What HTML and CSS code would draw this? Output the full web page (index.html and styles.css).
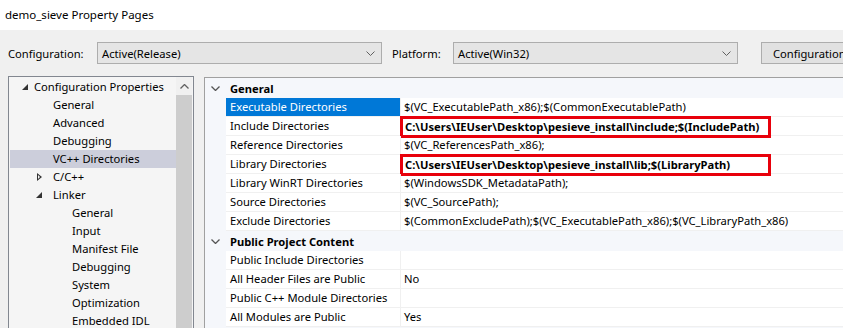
FILE: index.html
```html
<!DOCTYPE html>
<html lang="en">
<head>
    <meta charset="UTF-8">
    <title>demo_sieve Property Pages</title>
    <link rel="stylesheet" href="styles.css">
</head>
<body>
    <div class="titlebar">demo_sieve Property Pages</div>
    <div class="window">
        <div class="toolbar">
            <span class="label">Configuration:</span>
            <div class="combo config-combo">
                <span>Active(Release)</span>
                <svg width="9" height="5" viewBox="0 0 9 5"><path d="M0.5 0.5 L4.5 4.5 L8.5 0.5" fill="none" stroke="#606060" stroke-width="1"/></svg>
            </div>
            <span class="label platform-label">Platform:</span>
            <div class="combo platform-combo">
                <span>Active(Win32)</span>
                <svg width="9" height="5" viewBox="0 0 9 5"><path d="M0.5 0.5 L4.5 4.5 L8.5 0.5" fill="none" stroke="#606060" stroke-width="1"/></svg>
            </div>
            <button class="btn">Configuration Manager...</button>
        </div>

        <div class="main">
            <div class="tree">
                <div class="tree-items">
                    <div class="node lvl0"><span class="tri open"></span>Configuration Properties</div>
                    <div class="node lvl1">General</div>
                    <div class="node lvl1">Advanced</div>
                    <div class="node lvl1">Debugging</div>
                    <div class="node lvl1 selected">VC++ Directories</div>
                    <div class="node lvl1b"><span class="tri closed"></span>C/C++</div>
                    <div class="node lvl1b"><span class="tri open"></span>Linker</div>
                    <div class="node lvl2">General</div>
                    <div class="node lvl2">Input</div>
                    <div class="node lvl2">Manifest File</div>
                    <div class="node lvl2">Debugging</div>
                    <div class="node lvl2">System</div>
                    <div class="node lvl2">Optimization</div>
                    <div class="node lvl2">Embedded IDL</div>
                </div>
                <div class="scrollbar">
                    <div class="arrow">
                        <svg width="9" height="5" viewBox="0 0 9 5"><path d="M0.5 4.5 L4.5 0.5 L8.5 4.5" fill="none" stroke="#606060" stroke-width="1.3"/></svg>
                    </div>
                    <div class="thumb"></div>
                </div>
            </div>

            <div class="grid">
                <div class="group">
                    <span class="chev"><svg width="9" height="5" viewBox="0 0 9 5"><path d="M0.5 0.5 L4.5 4.5 L8.5 0.5" fill="none" stroke="#555" stroke-width="1.3"/></svg></span>
                    <span class="group-name">General</span>
                </div>
                <div class="row active"><span class="name">Executable Directories</span><span class="value">$(VC_ExecutablePath_x86);$(CommonExecutablePath)</span></div>
                <div class="row"><span class="name">Include Directories</span><span class="value bold"><span class="mark">C:\Users\IEUser\Desktop\pesieve_install\include;$(IncludePath)</span></span></div>
                <div class="row"><span class="name">Reference Directories</span><span class="value">$(VC_ReferencesPath_x86);</span></div>
                <div class="row"><span class="name">Library Directories</span><span class="value bold"><span class="mark">C:\Users\IEUser\Desktop\pesieve_install\lib;$(LibraryPath)</span></span></div>
                <div class="row"><span class="name">Library WinRT Directories</span><span class="value">$(WindowsSDK_MetadataPath);</span></div>
                <div class="row"><span class="name">Source Directories</span><span class="value">$(VC_SourcePath);</span></div>
                <div class="row"><span class="name">Exclude Directories</span><span class="value">$(CommonExcludePath);$(VC_ExecutablePath_x86);$(VC_LibraryPath_x86)</span></div>
                <div class="group">
                    <span class="chev"><svg width="9" height="5" viewBox="0 0 9 5"><path d="M0.5 0.5 L4.5 4.5 L8.5 0.5" fill="none" stroke="#555" stroke-width="1.3"/></svg></span>
                    <span class="group-name">Public Project Content</span>
                </div>
                <div class="row"><span class="name">Public Include Directories</span><span class="value"></span></div>
                <div class="row"><span class="name">All Header Files are Public</span><span class="value">No</span></div>
                <div class="row"><span class="name">Public C++ Module Directories</span><span class="value"></span></div>
                <div class="row"><span class="name">All Modules are Public</span><span class="value">Yes</span></div>
            </div>
        </div>
    </div>
</body>
</html>
```

FILE: styles.css
```css
* {
    margin: 0;
    padding: 0;
    box-sizing: border-box;
}

body {
    font-family: "Noto Sans", "Open Sans", sans-serif;
    font-size: 11.2px;
    color: #000;
    background: #f0f0f0;
    width: 843px;
    height: 328px;
    overflow: hidden;
}

.titlebar {
    height: 30px;
    background: #fff;
    padding-left: 5px;
    line-height: 30px;
    font-size: 11.5px;
}

.window {
    background: #f0f0f0;
}

.toolbar {
    display: flex;
    align-items: center;
    height: 46px;
    padding-left: 8px;
    white-space: nowrap;
}

.toolbar > * {
    flex-shrink: 0;
}

.label {
    width: 89px;
}

.platform-label {
    width: 61px;
    margin-left: 10px;
}

.combo {
    height: 22px;
    border: 1px solid #adadad;
    background: #e5e5e5;
    display: flex;
    align-items: center;
    justify-content: space-between;
    padding: 0 6px 0 4px;
}

.config-combo {
    width: 285px;
}

.platform-combo {
    width: 285px;
}

.btn {
    margin-left: 23px;
    height: 22px;
    padding: 0 11px;
    border: 1px solid #adadad;
    background: #e1e1e1;
    font-family: inherit;
    font-size: 11.2px;
    white-space: nowrap;
}

.main {
    display: flex;
    align-items: flex-start;
    padding-left: 8px;
}

.tree {
    width: 186px;
    height: 260px;
    flex-shrink: 0;
    border: 1px solid #828790;
    background: #f5f5f5;
    display: flex;
}

.tree-items {
    flex: 1;
    padding-top: 1px;
    padding-left: 1px;
}

.node {
    height: 18px;
    line-height: 18px;
    white-space: nowrap;
    display: flex;
    align-items: center;
}

.node.lvl0 {
    padding-left: 12px;
}

.node.lvl0 .tri {
    width: 12px;
}

.node.lvl1 {
    padding-left: 43px;
}

.node.lvl1b {
    padding-left: 26px;
}

.node.lvl1b .tri {
    width: 17px;
}

.node.lvl2 {
    padding-left: 62px;
}

.node.selected {
    background: #cccedb;
}

.tri {
    height: 10px;
    display: inline-block;
    position: relative;
}

.tri.open::before {
    content: "";
    position: absolute;
    left: 0;
    top: 2px;
    border-left: 6px solid transparent;
    border-bottom: 6px solid #333;
}

.tri.closed::before {
    content: "";
    position: absolute;
    left: 1px;
    top: 1px;
    width: 0;
    height: 0;
    border-top: 4px solid transparent;
    border-bottom: 4px solid transparent;
    border-left: 5px solid #333;
}

.tri.closed::after {
    content: "";
    position: absolute;
    left: 2px;
    top: 3px;
    border-top: 2px solid transparent;
    border-bottom: 2px solid transparent;
    border-left: 2.5px solid #f5f5f5;
}

.scrollbar {
    width: 16px;
    margin-right: 1px;
    background: #e8e8e8;
    display: flex;
    flex-direction: column;
}

.arrow {
    height: 18px;
    display: flex;
    align-items: center;
    justify-content: center;
    background: #f0f0f0;
}

.thumb {
    flex: 1;
    background: #cdcdcd;
}

.grid {
    margin-left: 10px;
    margin-top: 1px;
    flex: 1;
    border-top: 1px solid #a0a0a0;
    border-left: 1px solid #a0a0a0;
    background: #f5f7fb;
    padding-bottom: 20px;
}

.group {
    height: 20px;
    display: flex;
    align-items: center;
    background: #f5f7fb;
}

.chev {
    width: 21px;
    display: flex;
    justify-content: center;
    padding-top: 1px;
}

.group-name {
    font-weight: bold;
    padding-left: 4px;
}

.row {
    height: 19px;
    display: flex;
    margin-left: 21px;
    background: #fff;
    border-bottom: 1px solid #f0f0f0;
}

.name {
    width: 175px;
    flex-shrink: 0;
    padding-left: 4px;
    line-height: 18px;
    border-right: 1px solid #f0f0f0;
    white-space: nowrap;
}

.row.active .name {
    background: #0078d7;
    color: #fff;
}

.value {
    flex: 1;
    padding-left: 3px;
    line-height: 18px;
    white-space: nowrap;
}

.value.bold {
    font-weight: bold;
}

.mark {
    display: inline-block;
    border: 3px solid #e8000b;
    margin-left: -4px;
    margin-top: -1px;
    width: 371px;
    padding-left: 2px;
    height: 22px;
    line-height: 16px;
}
```
